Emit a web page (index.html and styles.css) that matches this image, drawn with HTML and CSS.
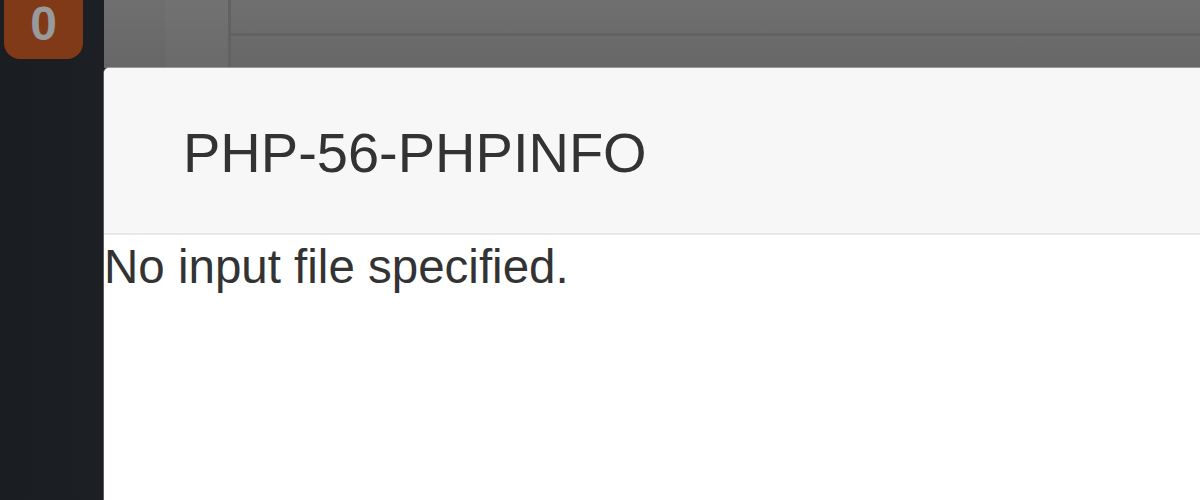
FILE: index.html
```html
<!DOCTYPE html>
<html lang="en">
<head>
    <meta charset="UTF-8">
    <title>PHP-56-PHPINFO</title>
    <link rel="stylesheet" href="styles.css">
</head>
<body>
    <div class="sidebar">
        <div class="badge">0</div>
    </div>
    <div class="main">
        <div class="topbar">
            <div class="tb-left">
                <div class="tb-cell"></div>
                <div class="tb-cell tb-light"></div>
            </div>
            <div class="tb-right">
                <div class="tb-row"></div>
                <div class="tb-row"></div>
            </div>
        </div>
        <div class="modal">
            <div class="modal-header">
                <h4 class="modal-title">PHP-56-PHPINFO</h4>
            </div>
            <div class="modal-body">No input file specified.</div>
        </div>
    </div>
</body>
</html>
```

FILE: styles.css
```css
html, body {
    margin: 0;
    padding: 0;
    height: 500px;
    overflow: hidden;
}
body {
    display: flex;
    font-family: 'Liberation Sans', Arial, sans-serif;
    background: #1b1f23;
}
.sidebar {
    width: 104px;
    flex-shrink: 0;
    background: linear-gradient(90deg, #1a1d21 0%, #1c2024 100%);
    display: flex;
    flex-direction: column;
    align-items: flex-start;
}
.badge {
    width: 79px;
    height: 79px;
    margin: -20px 0 0 4px;
    background: #813a18;
    border-radius: 16px;
    color: #999a9b;
    font-weight: bold;
    font-size: 48px;
    line-height: 1;
    text-align: center;
    box-sizing: border-box;
    padding-top: 20px;
}
.main {
    flex: 1;
    display: flex;
    flex-direction: column;
}
.topbar {
    height: 68px;
    flex-shrink: 0;
    display: flex;
    background: linear-gradient(180deg, #6f6f6f 0%, #676767 100%);
}
.tb-left {
    width: 124px;
    display: flex;
    border-right: 3px solid #626262;
}
.tb-cell {
    flex: 1;
}
.tb-light {
    background: rgba(255,255,255,0.025);
}
.tb-right {
    flex: 1;
    display: flex;
    flex-direction: column;
}
.tb-row {
    flex: 1;
}
.tb-row + .tb-row {
    border-top: 3px solid #626262;
}
.modal {
    flex: 1;
    background: #fff;
    border-top-left-radius: 5px;
    box-shadow: -1px 0 0 #5c5c5c, 0 -1px 0 #9a9a9a;
}
.modal-header {
    background: #f7f7f7;
    border-top-left-radius: 5px;
    border-bottom: 2px solid #e9e9e9;
    padding: 57px 0 52px 79px;
}
.modal-title {
    margin: 0;
    font-size: 56px;
    line-height: 1;
    font-weight: normal;
    color: #333;
}
.modal-body {
    padding-top: 5px;
    font-size: 47.5px;
    line-height: 1.15;
    color: #333;
}
```
